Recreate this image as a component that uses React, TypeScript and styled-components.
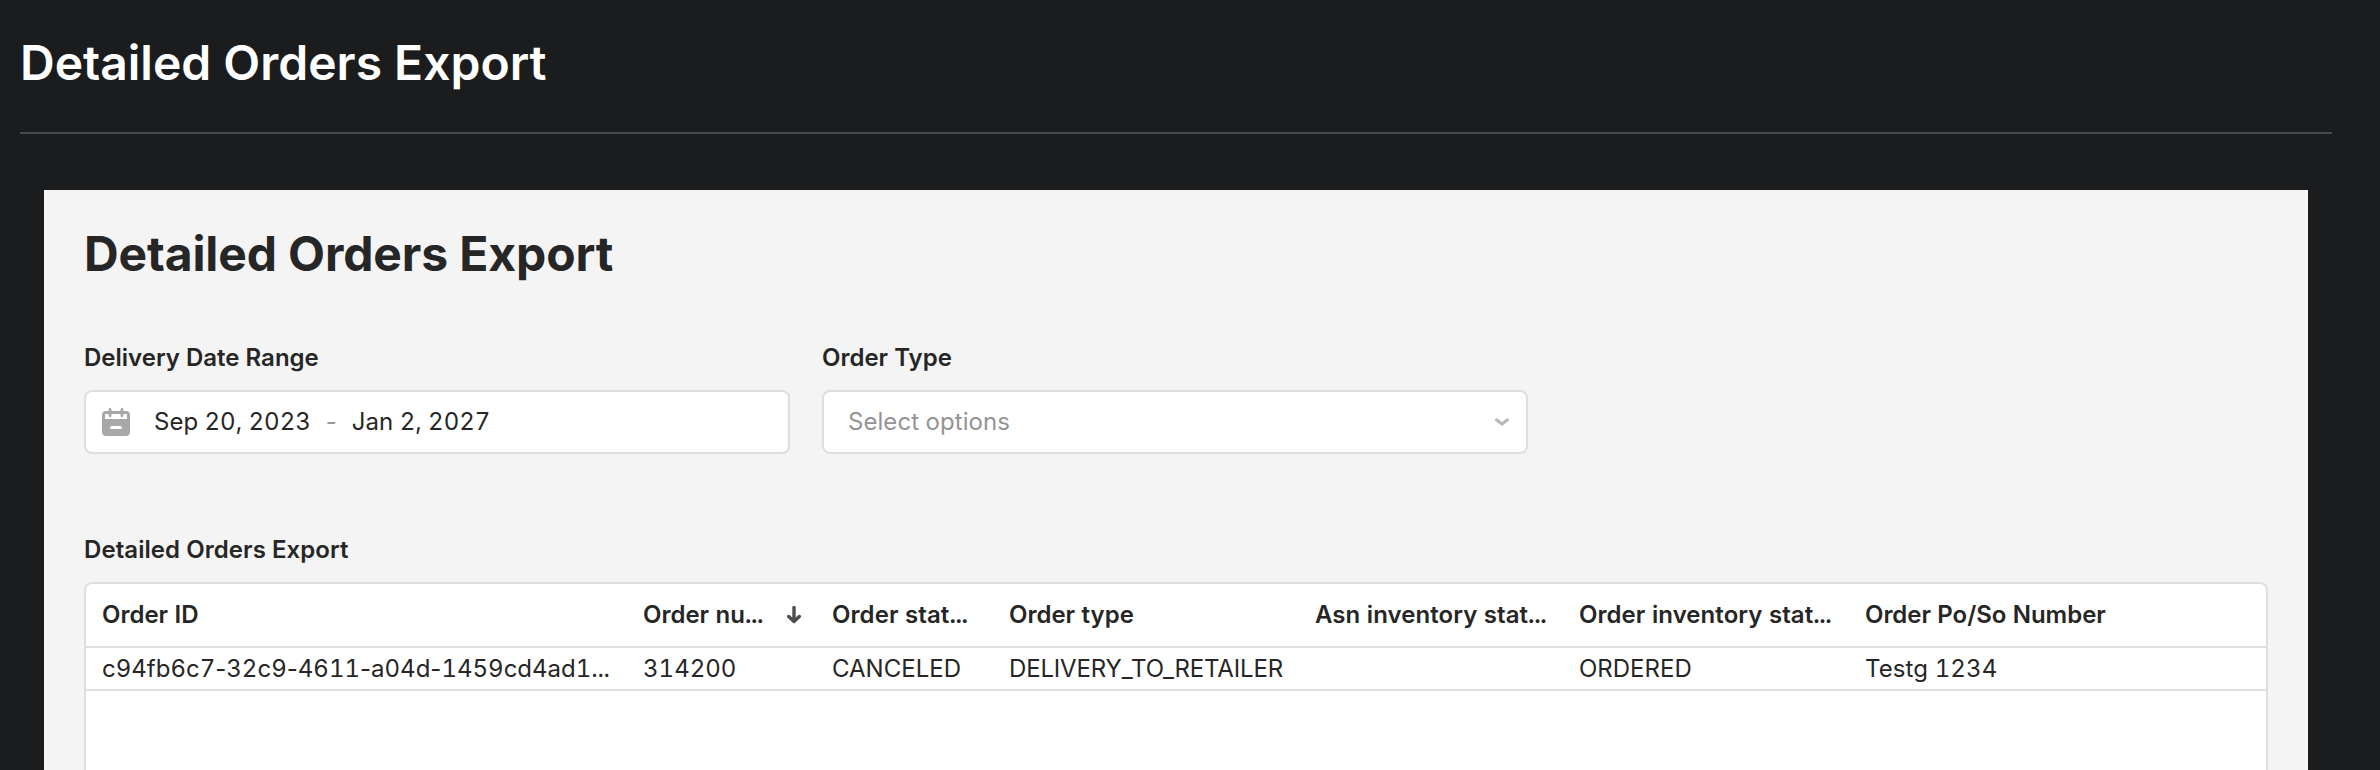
import React from "react";
import styled, { createGlobalStyle } from "styled-components";

const GlobalStyle = createGlobalStyle`
  *, *::before, *::after { box-sizing: border-box; }
  body {
    margin: 0;
    background: #1b1c1e;
    font-family: Inter, "Liberation Sans", sans-serif;
    color: #262626;
  }
`;

const Page = styled.div`
  display: flex;
  flex-direction: column;
  height: 770px;
  overflow: hidden;
  padding: 0 48px 0 20px;
`;

const PageHeader = styled.header`
  flex: none;
  height: 134px;
  padding-top: 34px;
  border-bottom: 2px solid #48494b;
`;

const PageTitle = styled.h1`
  margin: 0;
  font-size: 48px;
  line-height: 58px;
  font-weight: 600;
  color: #fff;
`;

const Panel = styled.main`
  flex: 1;
  min-height: 0;
  display: flex;
  flex-direction: column;
  margin: 56px 24px 0;
  padding: 35px 40px 0;
  background: #f4f4f4;
`;

const PanelTitle = styled.h2`
  flex: none;
  margin: 0;
  font-size: 48px;
  line-height: 58px;
  font-weight: 700;
  letter-spacing: -0.12px;
`;

const Filters = styled.div`
  flex: none;
  display: flex;
  gap: 32px;
  margin-top: 60px;
`;

const Field = styled.div`
  width: 706px;
`;

const Label = styled.div<{ $tracking?: number }>`
  flex: none;
  height: 47px;
  font-size: 24px;
  line-height: 29px;
  font-weight: 600;
  letter-spacing: ${(p) => p.$tracking ?? 0}px;
`;

const Control = styled.div<{ $left: number; $right: number }>`
  display: flex;
  align-items: center;
  height: 64px;
  padding: 0 ${(p) => p.$right}px 2px ${(p) => p.$left}px;
  border: 2px solid #dedede;
  border-radius: 8px;
  background: #fff;
  font-size: 24px;
  font-variant-numeric: tabular-nums;
`;

const CalendarIcon = styled.svg`
  flex: none;
  width: 28px;
  height: 28px;
  margin: 2px 24px 0 0;
`;

const Dash = styled.span`
  margin: 0 15px;
  color: #999;
  font-variant-numeric: normal;
`;

const Placeholder = styled.span`
  flex: 1;
  color: #949494;
  letter-spacing: 0.05px;
`;

const Chevron = styled.svg`
  flex: none;
  width: 14px;
  height: 8px;
  margin-top: 2px;
`;

const Section = styled.section`
  flex: 1;
  min-height: 0;
  display: flex;
  flex-direction: column;
  margin-top: 81px;
`;

const Table = styled.div`
  flex: 1;
  min-height: 0;
  border: 2px solid #dedede;
  border-bottom: 0;
  border-radius: 8px 8px 0 0;
  background: #fff;
`;

const Row = styled.div<{ $header?: boolean }>`
  display: grid;
  grid-template-columns: 541px 189px 177px 306px 264px 286px 1fr;
  align-items: center;
  height: ${(p) => (p.$header ? 64 : 43)}px;
  padding-bottom: ${(p) => (p.$header ? 1 : 0)}px;
  border-bottom: 2px solid #dedede;
  font-size: 24px;
  line-height: 29px;
  font-weight: ${(p) => (p.$header ? 600 : 400)};
  font-variant-numeric: tabular-nums;
`;

const Cell = styled.div<{ $tracking?: number }>`
  display: flex;
  align-items: center;
  justify-content: space-between;
  min-width: 0;
  padding: 0 15px 0 16px;
  white-space: nowrap;
  letter-spacing: ${(p) => p.$tracking ?? 0}px;
`;

const Dots = styled.span`
  letter-spacing: -0.4px;
`;

const Hyphen = styled.span`
  font-variant-numeric: normal;
`;

const SortArrow = styled.svg`
  flex: none;
  width: 14px;
  height: 18px;
  margin-top: 1px;
`;

const columns = [
  { name: "Order ID" },
  { name: "Order nu", clipped: true, sorted: true },
  { name: "Order stat", clipped: true, tracking: 0.08 },
  { name: "Order type" },
  { name: "Asn inventory stat", clipped: true, tracking: 0.06 },
  { name: "Order inventory stat", clipped: true, tracking: 0.06 },
  { name: "Order Po/So Number", tracking: -0.04 },
];

const order = [
  { value: "c94fb6c7-32c9-4611-a04d-1459cd4ad1", clipped: true },
  { value: "314200" },
  { value: "CANCELED" },
  { value: "DELIVERY_TO_RETAILER", tracking: -0.16 },
  { value: "" },
  { value: "ORDERED" },
  { value: "Testg 1234", tracking: 0.1 },
];

export default function App() {
  return (
    <>
      <GlobalStyle />
      <Page>
        <PageHeader>
          <PageTitle>Detailed Orders Export</PageTitle>
        </PageHeader>
        <Panel>
          <PanelTitle>Detailed Orders Export</PanelTitle>
          <Filters>
            <Field>
              <Label>Delivery Date Range</Label>
              <Control $left={16} $right={16}>
                <CalendarIcon viewBox="0 0 28 28">
                  <rect y="3" width="28" height="25" rx="4" fill="#a8a8a8" />
                  <path d="M3 6h22v5H3z" fill="#fff" />
                  <path d="M8 1.400v6.400M20 1.400v6.400" stroke="#a8a8a8" strokeWidth="2.800" strokeLinecap="round" />
                  <path d="M9.500 19.500h9" stroke="#fff" strokeWidth="3" strokeLinecap="round" />
                </CalendarIcon>
                <span>Sep 20, 2023</span>
                <Dash>-</Dash>
                <span>Jan 2, 2027</span>
              </Control>
            </Field>
            <Field>
              <Label>Order Type</Label>
              <Control $left={24} $right={17}>
                <Placeholder>Select options</Placeholder>
                <Chevron viewBox="0 0 14 8">
                  <path d="M1.500 1.800 7 6l5.500-4.200" fill="none" stroke="#b8b8b8" strokeWidth="3" strokeLinecap="round" />
                </Chevron>
              </Control>
            </Field>
          </Filters>
          <Section>
            <Label $tracking={0.06}>Detailed Orders Export</Label>
            <Table>
              <Row $header>
                {columns.map((column) => (
                  <Cell key={column.name} $tracking={column.tracking}>
                    <span>
                      {column.name}
                      {column.clipped && <Dots>...</Dots>}
                    </span>
                    {column.sorted && (
                      <SortArrow viewBox="0 0 14 18">
                        <path d="M7 1.500V14M1.700 10.500 7 15.500l5.300-5" fill="none" stroke="#4d4d4d" strokeWidth="3.400" strokeLinecap="round" strokeLinejoin="round" />
                      </SortArrow>
                    )}
                  </Cell>
                ))}
              </Row>
              <Row>
                {order.map((cell, i) => (
                  <Cell key={columns[i].name} $tracking={cell.tracking}>
                    <span>
                      {cell.value.split("-").map((part, n) => (
                        <React.Fragment key={n}>
                          {n > 0 && <Hyphen>-</Hyphen>}
                          {part}
                        </React.Fragment>
                      ))}
                      {cell.clipped && <Dots>...</Dots>}
                    </span>
                  </Cell>
                ))}
              </Row>
            </Table>
          </Section>
        </Panel>
      </Page>
    </>
  );
}
